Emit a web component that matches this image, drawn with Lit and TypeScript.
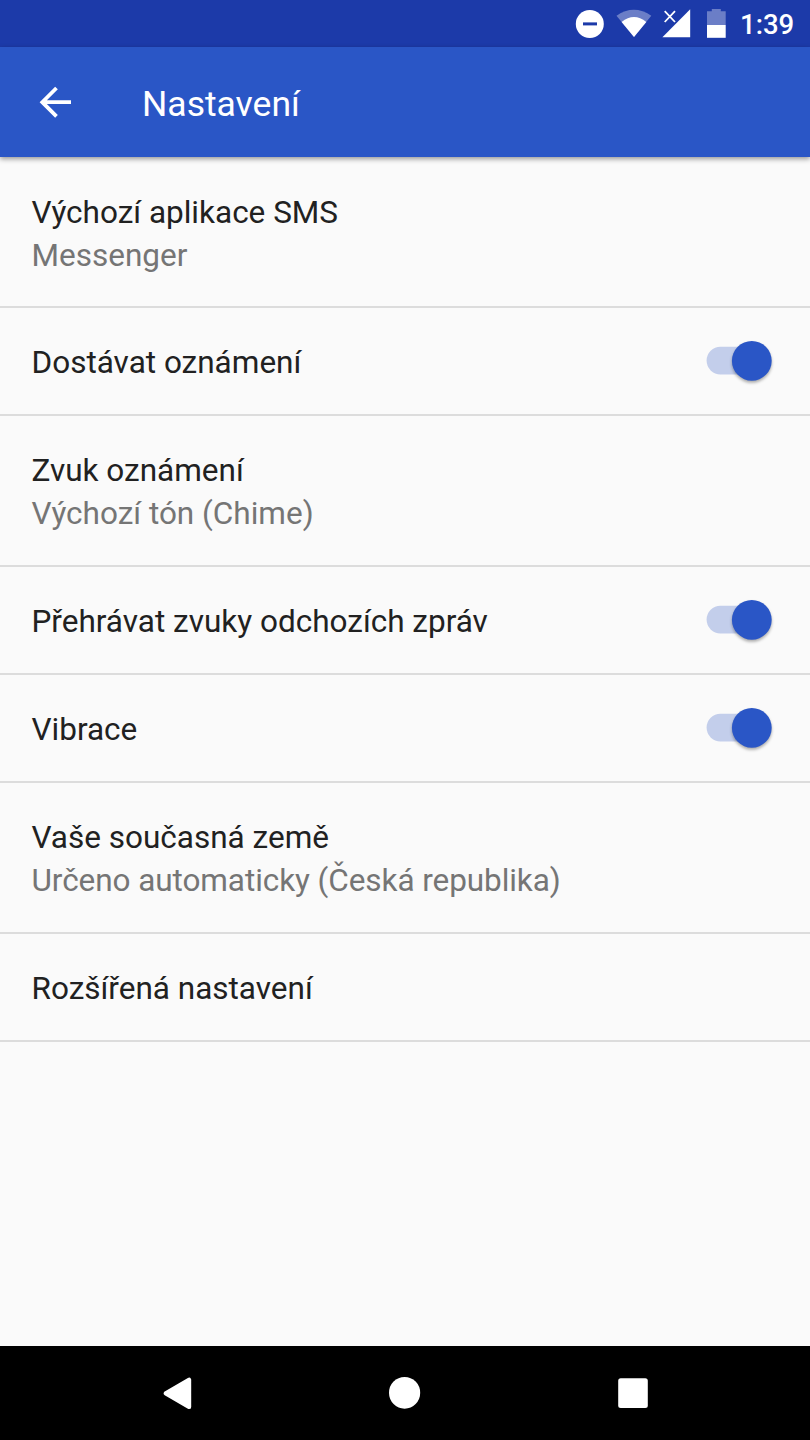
import { LitElement, html, css, svg, nothing } from "lit";
import { customElement, property } from "lit/decorators.js";

interface Setting {
  title: string;
  summary?: string;
  toggle?: boolean;
}

const SETTINGS: Setting[] = [
  { title: "Výchozí aplikace SMS", summary: "Messenger" },
  { title: "Dostávat oznámení", toggle: true },
  { title: "Zvuk oznámení", summary: "Výchozí tón (Chime)" },
  { title: "Přehrávat zvuky odchozích zpráv", toggle: true },
  { title: "Vibrace", toggle: true },
  { title: "Vaše současná země", summary: "Určeno automaticky (Česká republika)" },
  { title: "Rozšířená nastavení" },
];

@customElement("status-bar")
class StatusBar extends LitElement {
  static styles = css`
    :host {
      display: flex;
      flex: none;
      height: 47.25px;
      justify-content: flex-end;
      background: #1c3aa9;
      color: #fff;
    }
    .icons {
      display: block;
      flex: none;
      width: 170px;
      height: 47px;
    }
    .clock {
      flex: none;
      width: 70px;
      box-sizing: border-box;
      font: 500 27.5px/47px Roboto, sans-serif;
      padding: 1px 0 0 0;
    }
  `;
  render() {
    return html`
      <svg class="icons" viewBox="570 0 170 47" fill="#fff">
        <circle cx="589.8" cy="24" r="14" />
        <rect x="583" y="22.4" width="14" height="3" fill="#1c3aa9" />
        <path d="M616.5 15.7Q633.8 4 651.3 15.7L634 37Z" opacity=".35" />
        <path d="M621.6 22Q634 12 646.3 22L634 37Z" />
        <path d="M690.2 9.2V37.3H662.4Z" />
        <path d="M664.7 11.2L675 22M675 11.2L664.7 22" stroke="#fff" stroke-width="1.8" />
        <path d="M707 25V11.2H711.8V9H720.8V11.2H725.7V25Z" opacity=".35" />
        <rect x="707" y="25" width="18.7" height="12.8" />
      </svg>
      <div class="clock">1:39</div>
    `;
  }
}

@customElement("setting-row")
class SettingRow extends LitElement {
  @property({ attribute: false }) item!: Setting;

  static styles = css`
    :host {
      display: flex;
      align-items: center;
      justify-content: space-between;
      border-bottom: 2px solid #dcdcdc;
      font: 400 31.5px/43px Roboto, sans-serif;
    }
    .text {
      padding: 33px 0 30px 31.5px;
      white-space: nowrap;
    }
    :host(:first-of-type) .text {
      padding-top: 34px;
      padding-bottom: 29px;
    }
    :host(:nth-of-type(6)) .summary {
      letter-spacing: -0.075px;
    }
    .title {
      color: #212121;
    }
    .summary {
      color: #757575;
    }
    .switch {
      display: block;
      width: 110px;
      height: 60px;
      overflow: visible;
    }
    .thumb {
      filter: drop-shadow(0 2px 1.5px rgba(0, 0, 0, 0.32));
    }
  `;
  render() {
    const { title, summary, toggle } = this.item;
    return html`
      <div class="text">
        <div class="title">${title}</div>
        ${summary ? html`<div class="summary">${summary}</div>` : nothing}
      </div>
      ${toggle
        ? html`<svg class="switch" viewBox="0 0 110 60">
            ${svg`<rect x="6.6" y="15.7" width="59" height="27.8" rx="13.9" fill="#c3ceeb" />
            <circle class="thumb" cx="51.8" cy="29.8" r="19.9" fill="#2a56c6" />`}
          </svg>`
        : nothing}
    `;
  }
}

@customElement("app-root")
class AppRoot extends LitElement {
  static styles = css`
    :host {
      display: flex;
      flex-direction: column;
      width: 810px;
      height: 1440px;
      overflow: hidden;
      background: #fafafa;
    }
    .appbar {
      display: flex;
      flex: none;
      align-items: center;
      height: 110px;
      background: #2a56c6;
      color: #fff;
      box-shadow: 0 2px 5px rgba(0, 0, 0, 0.4);
      font: 400 35.5px/42px Roboto, sans-serif;
    }
    .back {
      display: block;
      width: 140px;
      height: 110px;
    }
    .heading {
      margin: 4px 0 0 2px;
      font: inherit;
    }
    .list {
      flex: 1;
    }
    .nav {
      display: block;
      flex: none;
      width: 810px;
      height: 94.5px;
      background: #000;
    }
  `;
  render() {
    return html`
      <status-bar></status-bar>
      <header class="appbar">
        <svg class="back" viewBox="0 47 140 110" fill="none" stroke="#fff" stroke-width="3.8">
          <path d="M71 102.2H42M56.5 88L42.3 102.2L56.5 116.4" />
        </svg>
        <h1 class="heading">Nastavení</h1>
      </header>
      <main class="list">
        ${SETTINGS.map((item) => html`<setting-row .item=${item}></setting-row>`)}
      </main>
      <svg class="nav" viewBox="0 1345.5 810 94.5" fill="#fff">
        <path
          d="M165.8 1392.9L189 1379.4V1406.4Z"
          stroke="#fff"
          stroke-width="4.4"
          stroke-linejoin="round"
        />
        <ellipse cx="404.6" cy="1392.3" rx="15.6" ry="15.9" />
        <rect x="618.2" y="1377.8" width="29.6" height="29.8" rx="2.5" />
      </svg>
    `;
  }
}
